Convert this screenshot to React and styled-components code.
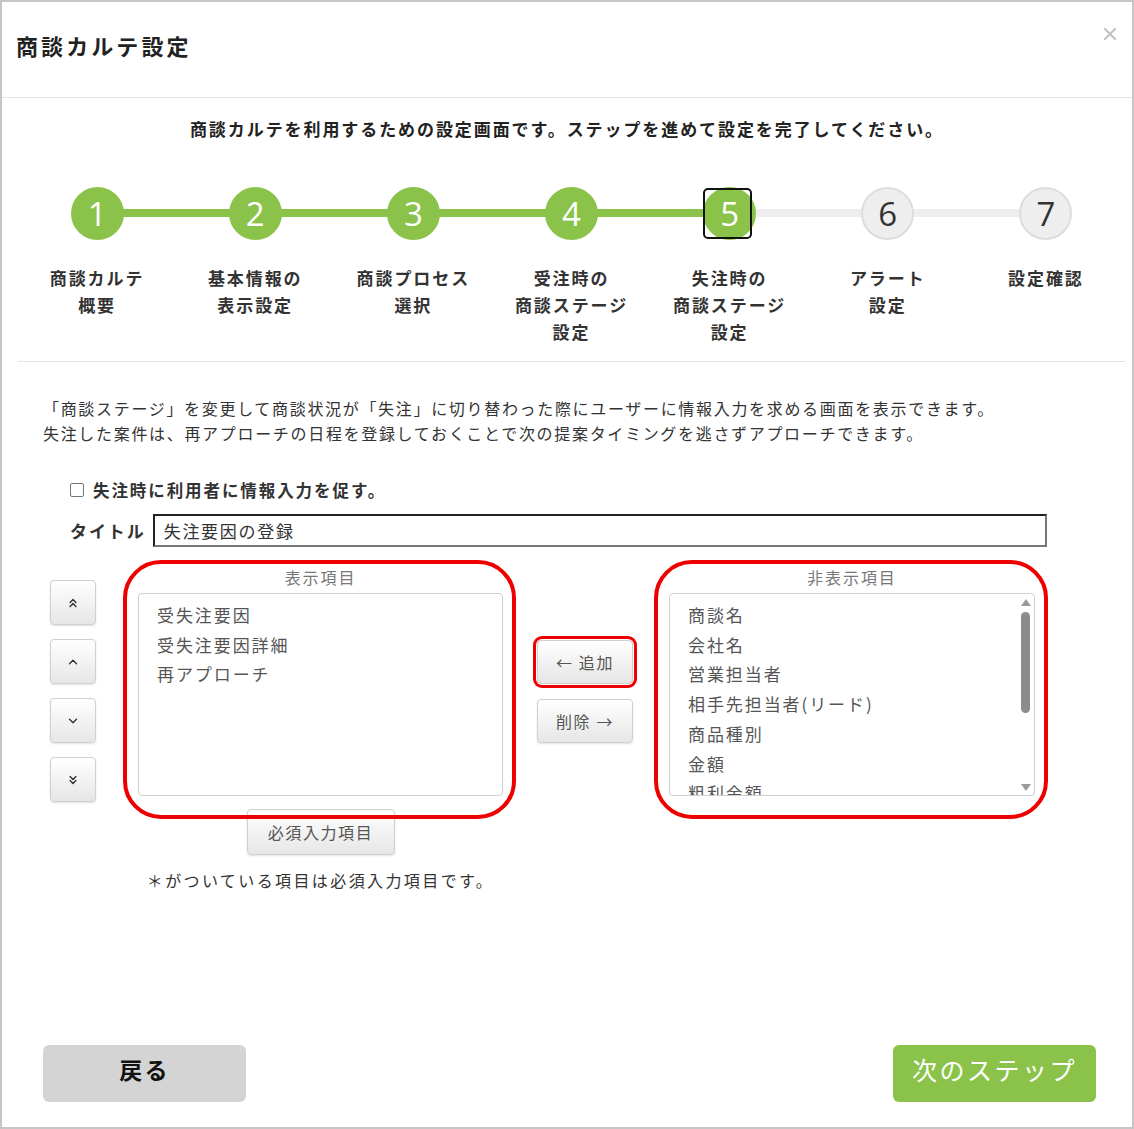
import React from 'react';
import styled, { createGlobalStyle } from 'styled-components';
import { ChevronsUp, ChevronUp, ChevronDown, ChevronsDown, X } from 'lucide-react';

const GREEN = '#8bc34a';

const GlobalStyle = createGlobalStyle`
  html, body { margin: 0; padding: 0; background: #fff; }
  body {
    font-family: "Noto Sans CJK JP", "Noto Sans", sans-serif;
    color: #333;
    letter-spacing: 0.12em;
  }
  * { box-sizing: border-box; }
`;

const Modal = styled.div`
  width: 1134px;
  height: 1129px;
  border: 2px solid #c6c6c6;
  display: flex;
  flex-direction: column;
  background: #fff;
`;

const Header = styled.div`
  height: 96px;
  display: flex;
  justify-content: space-between;
  align-items: flex-start;
  padding: 0 12px 0 14px;
  border-bottom: 1px solid #e5e5e5;
`;

const Title = styled.h1`
  margin: 28px 0 0;
  font-size: 22px;
  line-height: 30px;
  font-weight: 700;
  letter-spacing: 0.14em;
  color: #222;
`;

const CloseButton = styled.button`
  margin-top: 22px;
  border: none;
  background: none;
  padding: 0;
  color: #c4c4c4;
  display: flex;
`;

const Intro = styled.p`
  margin: 18px 0 0;
  text-align: center;
  font-size: 17px;
  line-height: 26px;
  font-weight: 700;
  color: #222;
`;

const StepsSection = styled.div`
  margin: 45px 7px 0 16px;
  padding-bottom: 16px;
  border-bottom: 1px solid #e3e3e3;
  display: grid;
  grid-template-columns: repeat(7, 1fr);
`;

const Step = styled.div`
  position: relative;
  display: flex;
  flex-direction: column;
  align-items: center;

  &:not(:last-child)::after {
    content: '';
    position: absolute;
    top: 22px;
    left: 50%;
    width: 100%;
    height: 8px;
    background: ${(p) => (p.$lineDone ? GREEN : '#eeeeee')};
  }
`;

const Circle = styled.div`
  position: relative;
  z-index: 1;
  width: 53px;
  height: 53px;
  border-radius: 50%;
  display: flex;
  align-items: center;
  justify-content: center;
  font-family: "Open Sans", sans-serif;
  font-size: 33px;
  letter-spacing: 0;
  background: ${(p) => (p.$done ? GREEN : '#eeeeee')};
  border: 2px solid ${(p) => (p.$done ? GREEN : '#dddddd')};
  color: ${(p) => (p.$done ? '#fff' : '#333')};

  ${(p) =>
    p.$current &&
    `
    &::before {
      content: '';
      position: absolute;
      z-index: -1;
      inset: -1px 2px -1px -2px;
      border: 2px solid #111;
      border-radius: 5px;
    }
  `}
`;

const StepLabel = styled.div`
  margin-top: 24px;
  font-size: 17px;
  line-height: 27px;
  font-weight: 700;
  text-align: center;
  color: #333;
  white-space: pre-line;
`;

const Description = styled.p`
  margin: 34px 0 0 41px;
  font-size: 16px;
  line-height: 25px;
  color: #333;
  letter-spacing: 0.105em;
`;

const CheckRow = styled.label`
  margin: 31px 0 0 68px;
  display: flex;
  align-items: center;
  gap: 9px;
  font-size: 16.5px;
  line-height: 26px;
  font-weight: 700;
`;

const CheckBox = styled.input`
  appearance: none;
  margin: 0;
  width: 14px;
  height: 14px;
  border: 1px solid #767676;
  border-radius: 2px;
  background: #fff;
`;

const TitleRow = styled.div`
  margin: 11px 0 0 68px;
  display: flex;
  align-items: center;
  gap: 7px;
`;

const FieldLabel = styled.span`
  font-size: 17px;
  font-weight: 700;
`;

const TextInput = styled.input`
  width: 894px;
  height: 33px;
  padding: 0 9px;
  font-family: inherit;
  font-size: 17px;
  letter-spacing: 0.1em;
  color: #333;
  border-style: solid;
  border-width: 2px;
  border-color: #222 #777 #777 #222;
  outline: none;
`;

const ListsRow = styled.div`
  margin: 18px 0 0 48px;
  display: flex;
  align-items: flex-start;
`;

const MoveColumn = styled.div`
  padding-top: 15px;
  display: flex;
  flex-direction: column;
  gap: 14px;
`;

const GrayButton = styled.button`
  font-family: inherit;
  letter-spacing: 0.1em;
  color: #555;
  border: 1px solid #d0d0d0;
  border-radius: 4px;
  background: linear-gradient(#ffffff, #e6e6e6);
  box-shadow: 0 1px 2px rgba(0, 0, 0, 0.12);
  display: flex;
  align-items: center;
  justify-content: center;
`;

const MoveButton = styled(GrayButton)`
  width: 46px;
  height: 45px;
  color: #333;
`;

const PanelColumn = styled.div`
  position: relative;
  margin-left: ${(p) => p.$gap}px;
  width: ${(p) => p.$width}px;
  display: flex;
  flex-direction: column;
  align-items: center;
`;

const Highlight = styled.div`
  position: absolute;
  z-index: 2;
  pointer-events: none;
  top: -5px;
  left: -15px;
  right: -13px;
  height: 259px;
  border: 4px solid #ee0000;
  border-radius: 38px;
`;

const PanelLabel = styled.div`
  font-size: 16px;
  line-height: 24px;
  color: #777;
`;

const ListBox = styled.div`
  margin-top: 4px;
  width: 100%;
  height: 203px;
  border: 1px solid #cfcfcf;
  border-radius: 4px;
  display: flex;
  overflow: hidden;
`;

const Items = styled.ul`
  flex: 1;
  margin: 0;
  padding: 6px 0 0 18px;
  list-style: none;
  overflow: hidden;
`;

const Item = styled.li`
  font-size: 17px;
  line-height: 29.7px;
  color: #555;
  white-space: nowrap;
`;

const ScrollTrack = styled.div`
  width: 17px;
  padding: 5px 0 4px;
  display: flex;
  flex-direction: column;
  align-items: center;
  justify-content: space-between;
`;

const ScrollArrow = styled.div`
  width: 0;
  height: 0;
  border-left: 5px solid transparent;
  border-right: 5px solid transparent;
  ${(p) => (p.$up ? 'border-bottom' : 'border-top')}: 7px solid #9a9a9a;
`;

const ScrollThumb = styled.div`
  width: 9px;
  height: 101px;
  margin-bottom: auto;
  margin-top: 6px;
  border-radius: 5px;
  background: #8c8c8c;
`;

const RequiredButton = styled(GrayButton)`
  margin-top: 13px;
  width: 148px;
  height: 46px;
  font-size: 16px;
`;

const Note = styled.p`
  margin: 13px 0 0 0;
  font-size: 16px;
  line-height: 24px;
  letter-spacing: 0.15em;
  color: #333;
`;

const TransferColumn = styled.div`
  margin-left: 34px;
  padding-top: 75px;
  display: flex;
  flex-direction: column;
  gap: 15px;
`;

const TransferButton = styled(GrayButton)`
  width: 96px;
  height: 44px;
  font-size: 16px;
  ${(p) => p.$marked && 'box-shadow: 0 0 0 1px #fff, 0 0 0 4px #ee0000; border-radius: 5px;'}
`;

const Footer = styled.div`
  margin-top: auto;
  padding: 0 36px 25px 41px;
  display: flex;
  justify-content: space-between;
`;

const FooterButton = styled.button`
  width: 203px;
  height: 57px;
  padding: 0 0 8px;
  border: none;
  border-radius: 6px;
  font-family: inherit;
  letter-spacing: 0.1em;
  line-height: 1;
  background: ${(p) => (p.$primary ? GREEN : '#d4d4d4')};
  color: ${(p) => (p.$primary ? '#fff' : '#111')};
  font-size: ${(p) => (p.$primary ? '25px' : '23px')};
  font-weight: ${(p) => (p.$primary ? 400 : 700)};
`;

const steps = [
  '商談カルテ\n概要',
  '基本情報の\n表示設定',
  '商談プロセス\n選択',
  '受注時の\n商談ステージ\n設定',
  '失注時の\n商談ステージ\n設定',
  'アラート\n設定',
  '設定確認',
];
const current = 5;

const shown = ['受失注要因', '受失注要因詳細', '再アプローチ'];
const hidden = ['商談名', '会社名', '営業担当者', '相手先担当者(リード)', '商品種別', '金額', '粗利金額'];

const App = () => {
  return (
    <>
      <GlobalStyle />
      <Modal>
        <Header>
          <Title>商談カルテ設定</Title>
          <CloseButton aria-label="close"><X size={20} strokeWidth={2.6} /></CloseButton>
        </Header>

        <Intro>商談カルテを利用するための設定画面です。ステップを進めて設定を完了してください。</Intro>

        <StepsSection>
          {steps.map((label, i) => (
            <Step key={i} $lineDone={i + 2 <= current}>
              <Circle $done={i + 1 <= current} $current={i + 1 === current}>{i + 1}</Circle>
              <StepLabel>{label}</StepLabel>
            </Step>
          ))}
        </StepsSection>

        <Description>
          「商談ステージ」を変更して商談状況が「失注」に切り替わった際にユーザーに情報入力を求める画面を表示できます。<br />
          失注した案件は、再アプローチの日程を登録しておくことで次の提案タイミングを逃さずアプローチできます。
        </Description>

        <CheckRow>
          <CheckBox type="checkbox" />
          失注時に利用者に情報入力を促す。
        </CheckRow>

        <TitleRow>
          <FieldLabel>タイトル</FieldLabel>
          <TextInput defaultValue="失注要因の登録" />
        </TitleRow>

        <ListsRow>
          <MoveColumn>
            <MoveButton><ChevronsUp size={14} strokeWidth={2.4} /></MoveButton>
            <MoveButton><ChevronUp size={14} strokeWidth={2.4} /></MoveButton>
            <MoveButton><ChevronDown size={14} strokeWidth={2.4} /></MoveButton>
            <MoveButton><ChevronsDown size={14} strokeWidth={2.4} /></MoveButton>
          </MoveColumn>

          <PanelColumn $gap={42} $width={365}>
            <Highlight />
            <PanelLabel>表示項目</PanelLabel>
            <ListBox>
              <Items>
                {shown.map((s) => <Item key={s}>{s}</Item>)}
              </Items>
            </ListBox>
            <RequiredButton>必須入力項目</RequiredButton>
            <Note>＊がついている項目は必須入力項目です。</Note>
          </PanelColumn>

          <TransferColumn>
            <TransferButton $marked>← 追加</TransferButton>
            <TransferButton>削除 →</TransferButton>
          </TransferColumn>

          <PanelColumn $gap={36} $width={366}>
            <Highlight />
            <PanelLabel>非表示項目</PanelLabel>
            <ListBox>
              <Items>
                {hidden.map((s) => <Item key={s}>{s}</Item>)}
              </Items>
              <ScrollTrack>
                <ScrollArrow $up />
                <ScrollThumb />
                <ScrollArrow />
              </ScrollTrack>
            </ListBox>
          </PanelColumn>
        </ListsRow>

        <Footer>
          <FooterButton>戻る</FooterButton>
          <FooterButton $primary>次のステップ</FooterButton>
        </Footer>
      </Modal>
    </>
  );
};

export default App;
